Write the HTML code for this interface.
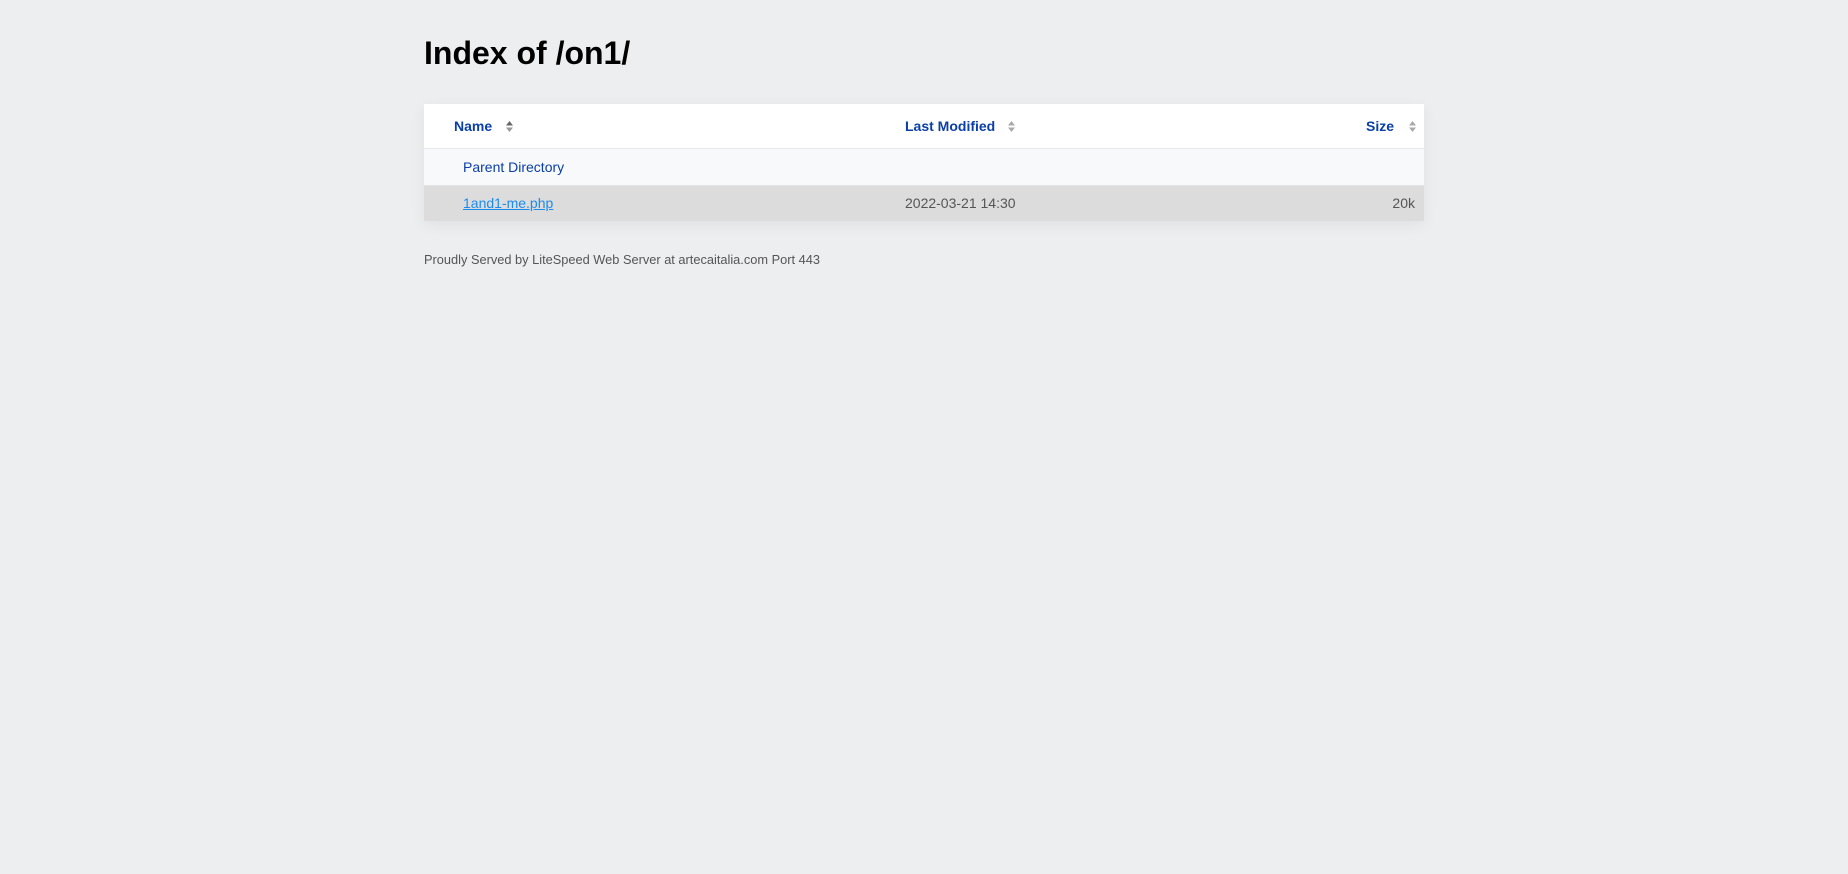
<!DOCTYPE html>
<html><head><meta charset="utf-8"><style>
body{margin:0;background:#eceef0;font-family:"Liberation Sans",Arial,sans-serif;width:1848px;height:874px;overflow:hidden;}
.wrap{position:absolute;left:424px;top:0;width:1000px;}
h1{position:absolute;left:0;top:35px;margin:0;font-size:32px;font-weight:bold;color:#000;white-space:nowrap;}
.tbl{position:absolute;left:0;top:104px;width:1000px;box-shadow:0 4px 14px rgba(0,0,0,0.06);}
.row{position:relative;width:1000px;font-size:14px;}
.hd{height:44px;background:#fff;border-bottom:1px solid #e6e8ea;}
.r1{height:36px;background:#f8f9fa;border-bottom:1px solid #e2e4e6;}
.r2{height:35px;background:#dcdcdc;}
.t{position:absolute;white-space:nowrap;}
.hd .t{top:14px;font-weight:bold;color:#0a3ea8;}
.r1 .t{top:10px;color:#0a3ea8;}
.r2 .t{top:9px;color:#555;}
a.f{color:#1a8cf0;text-decoration:underline;}
.arr{position:absolute;top:17px;width:7px;height:11px;}
.foot{position:absolute;left:0;top:252px;font-size:12.8px;color:#555;white-space:nowrap;}
</style></head><body>
<div class="wrap">
<h1>Index of /on1/</h1>
<div class="tbl">
<div class="row hd">
<span class="t" style="left:30px">Name</span>
<svg class="arr" style="left:82px" viewBox="0 0 7 11"><path d="M0 4.5L3.5 0L7 4.5Z" fill="#666"/><path d="M0 6.5L3.5 11L7 6.5Z" fill="#999"/></svg>
<span class="t" style="left:481px">Last Modified</span>
<svg class="arr" style="left:584px" viewBox="0 0 7 11"><path d="M0 4.5L3.5 0L7 4.5Z" fill="#aaa"/><path d="M0 6.5L3.5 11L7 6.5Z" fill="#aaa"/></svg>
<span class="t" style="right:30px">Size</span>
<svg class="arr" style="left:985px" viewBox="0 0 7 11"><path d="M0 4.5L3.5 0L7 4.5Z" fill="#aaa"/><path d="M0 6.5L3.5 11L7 6.5Z" fill="#aaa"/></svg>
</div>
<div class="row r1"><span class="t" style="left:39px">Parent Directory</span></div>
<div class="row r2"><span class="t" style="left:39px"><a class="f">1and1-me.php</a></span><span class="t" style="left:481px">2022-03-21 14:30</span><span class="t" style="right:9px">20k</span></div>
</div>
<div class="foot">Proudly Served by LiteSpeed Web Server at artecaitalia.com Port 443</div>
</div>
</body></html>
